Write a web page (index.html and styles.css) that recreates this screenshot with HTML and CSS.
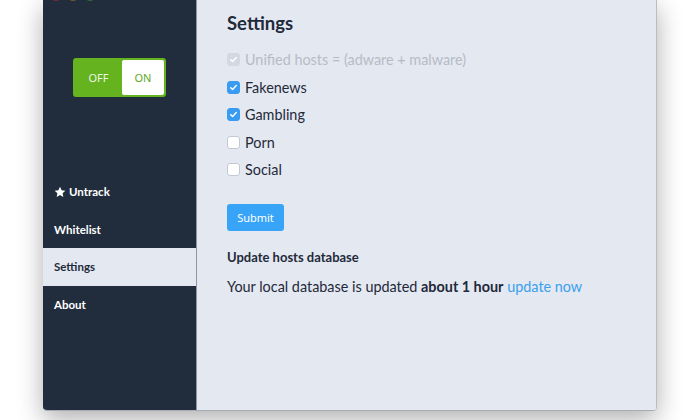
FILE: index.html
```html
<!DOCTYPE html>
<html>
<head>
<meta charset="utf-8">
<link rel="stylesheet" href="styles.css">
</head>
<body>
<div class="window">
  <div class="lights">
    <span class="light red"></span>
    <span class="light yellow"></span>
    <span class="light green"></span>
  </div>
  <aside class="sidebar">
    <div class="toggle">
      <span class="toggle-off">OFF</span>
      <span class="toggle-on">ON</span>
    </div>
    <nav class="nav">
      <a class="nav-item"><svg class="star" viewBox="0 0 24 24" width="12" height="12"><path d="M12 1.5l3.2 6.9 7.5.9-5.5 5.1 1.5 7.4L12 18.1l-6.7 3.7 1.5-7.4L1.3 9.3l7.5-.9z" fill="#fff"/></svg>Untrack</a>
      <a class="nav-item">Whitelist</a>
      <a class="nav-item active">Settings</a>
      <a class="nav-item">About</a>
    </nav>
  </aside>
  <main class="main">
    <h1 class="title">Settings</h1>
    <div class="options">
      <label class="option disabled"><span class="box checked"><svg viewBox="0 0 12 12" width="11" height="11"><path d="M3 6.2l2 2 4-4.4" fill="none" stroke="#fff" stroke-width="1.6" stroke-linecap="round" stroke-linejoin="round"/></svg></span>Unified hosts = (adware + malware)</label>
      <label class="option"><span class="box checked"><svg viewBox="0 0 12 12" width="11" height="11"><path d="M3 6.2l2 2 4-4.4" fill="none" stroke="#fff" stroke-width="1.6" stroke-linecap="round" stroke-linejoin="round"/></svg></span>Fakenews</label>
      <label class="option"><span class="box checked"><svg viewBox="0 0 12 12" width="11" height="11"><path d="M3 6.2l2 2 4-4.4" fill="none" stroke="#fff" stroke-width="1.6" stroke-linecap="round" stroke-linejoin="round"/></svg></span>Gambling</label>
      <label class="option"><span class="box"></span>Porn</label>
      <label class="option"><span class="box"></span>Social</label>
    </div>
    <button class="submit">Submit</button>
    <h2 class="subtitle">Update hosts database</h2>
    <p class="status">Your local database is updated <b>about 1 hour</b> <a class="link">update now</a></p>
  </main>
</div>
</body>
</html>
```
FILE: styles.css
```css
html, body {
  margin: 0;
  padding: 0;
  background: #ffffff;
  overflow: hidden;
}
body {
  font-family: Lato, "Noto Sans", sans-serif;
  width: 700px;
  height: 420px;
}
.window {
  position: relative;
  margin-left: 43px;
  width: 614px;
  height: 411px;
  display: flex;
  border-right: 1px solid #b9bcc4;
  border-bottom: 1px solid #a8acb5;
  border-radius: 0 0 4px 4px;
  box-sizing: border-box;
  box-shadow: 0 8px 26px rgba(0, 0, 0, 0.32);
  overflow: hidden;
}
.lights {
  position: absolute;
  top: -11px;
  left: 7px;
  display: flex;
  gap: 5px;
}
.light {
  width: 12px;
  height: 12px;
  border-radius: 50%;
}
.red { background: #7c2b3a; }
.yellow { background: #6f5a2c; }
.green { background: #2f6a35; }
.sidebar {
  width: 153px;
  flex: none;
  background: #212d3d;
  border-right: 1px solid #8f96a3;
  display: flex;
  flex-direction: column;
}
.toggle {
  margin: 58px 0 0 30px;
  width: 93px;
  height: 39px;
  box-sizing: border-box;
  background: #64b31f;
  border-radius: 3px;
  padding: 2px;
  display: flex;
  font-family: "Noto Sans", sans-serif;
  font-size: 11px;
}
.toggle-off {
  flex: 1;
  display: flex;
  align-items: center;
  justify-content: center;
  color: #eef6e4;
}
.toggle-on {
  width: 42px;
  background: #ffffff;
  border-radius: 2px;
  display: flex;
  align-items: center;
  justify-content: center;
  color: #5aaa1c;
}
.nav {
  margin-top: 76px;
  display: flex;
  flex-direction: column;
}
.nav-item {
  height: 37.5px;
  display: flex;
  align-items: center;
  padding-left: 11px;
  color: #ffffff;
  font-weight: bold;
  font-size: 11.5px;
}
.star {
  margin-right: 3px;
}
.nav-item.active {
  background: #e4e8f1;
  color: #1e2a3a;
}
.main {
  flex: 1;
  background: #e4e8f1;
  padding: 10px 30px 0 30px;
  color: #1f2a3a;
}
.title {
  margin: 0;
  font-size: 18.5px;
  font-weight: bold;
  line-height: 26px;
}
.options {
  margin-top: 10px;
  display: flex;
  flex-direction: column;
}
.option {
  height: 27.5px;
  display: flex;
  align-items: center;
  font-size: 14.4px;
}
.option.disabled {
  color: #b6bcc6;
}
.box {
  width: 13px;
  height: 13px;
  box-sizing: border-box;
  border: 1px solid #c3c9d3;
  background: #ffffff;
  border-radius: 3px;
  margin-right: 5px;
  display: flex;
  align-items: center;
  justify-content: center;
}
.box.checked {
  background: #3a9bf2;
  border-color: #3a9bf2;
}
.disabled .box.checked {
  background: #d3d9e2;
  border-color: #d3d9e2;
}
.submit {
  margin-top: 20px;
  width: 57px;
  height: 27px;
  border: none;
  border-radius: 3px;
  background: #38a4f8;
  color: #ffffff;
  font-family: "Noto Sans", sans-serif;
  font-size: 11px;
  padding: 0;
  display: block;
}
.subtitle {
  margin: 17px 0 0 0;
  font-size: 13px;
  font-weight: bold;
  line-height: 18px;
}
.status {
  margin: 11px 0 0 0;
  font-size: 14.4px;
  line-height: 20px;
}
.status b {
  font-weight: bold;
}
.link {
  color: #3aa0ee;
}
```
